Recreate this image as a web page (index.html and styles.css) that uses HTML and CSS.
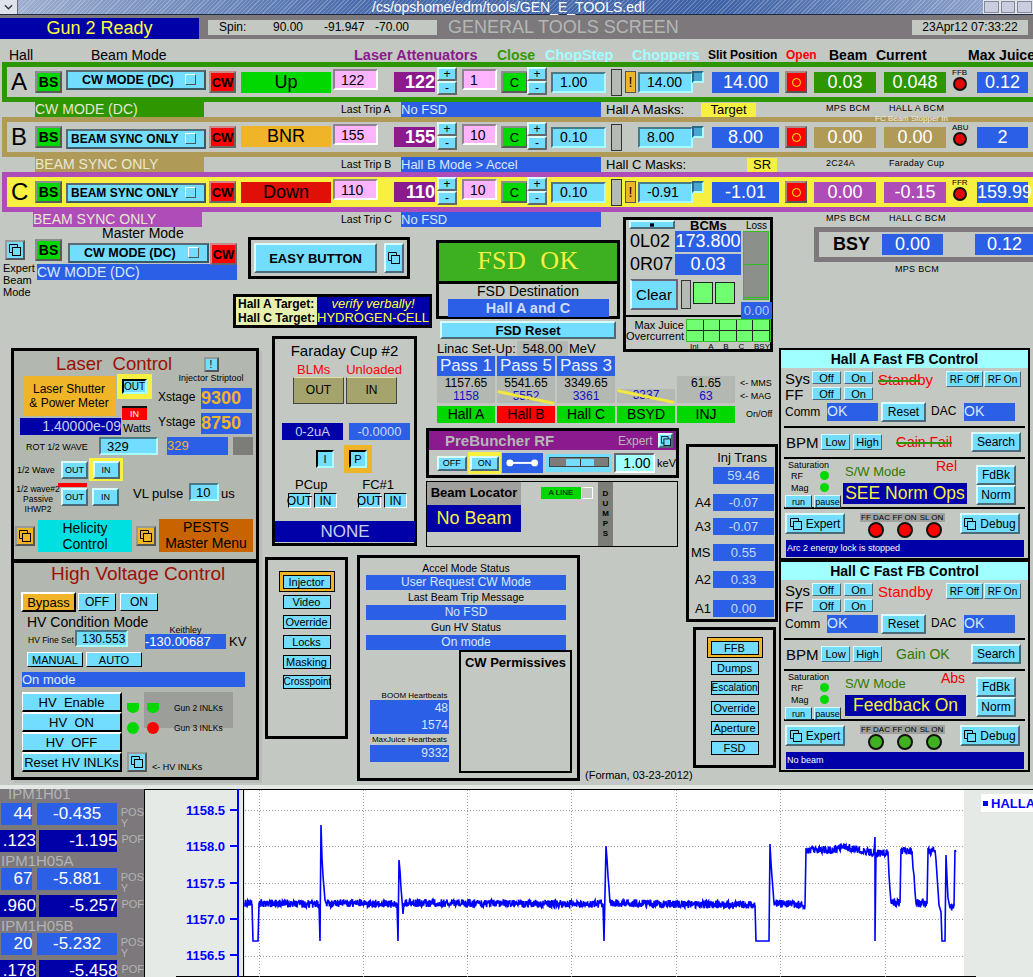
FILE: index.html
```html
<!DOCTYPE html>
<html lang="en">

<head>
    <meta charset="UTF-8">
    <title>/cs/opshome/edm/tools/GEN_E_TOOLS.edl</title>
    <link rel="stylesheet" href="styles.css">
</head>

<body>
    <svg class="defs">
        <symbol id="copy" viewBox="0 0 12 12">
            <path d="M3.5 8.5h-3v-8h8v3" fill="none" stroke="#000" />
            <rect x="3.5" y="3.5" width="8" height="8" fill="none" stroke="#000" />
        </symbol>
    </svg>

    <header class="titlebar">
        <div class="wm-left"><svg viewBox="0 0 10 6" class="wm-chevron"><path d="M1 1l4 4 4-4" fill="none" stroke="#334" stroke-width="1.5" /></svg></div>
        <div class="wm-title">/cs/opshome/edm/tools/GEN_E_TOOLS.edl</div>
        <div class="wm-right"><i></i><i></i><i></i></div>
    </header>

    <div class="topbar">
        <div class="gun">Gun 2 Ready</div>
        <div class="spin"><span>Spin:</span><span>90.00</span><span>-91.947</span><span>-70.00</span></div>
        <div class="screen-title">GENERAL TOOLS SCREEN</div>
        <div class="clock">23Apr12 07:33:22</div>
    </div>

    <div class="col-labels">
        <span>Hall</span><span>Beam Mode</span><span class="l-laser">Laser Attenuators</span><span class="l-close">Close</span>
        <span class="l-chop">ChopStep</span><span class="l-chop">Choppers</span><span class="l-slit">Slit Position</span><span class="l-open">Open</span>
        <span class="l-beam">Beam</span><span class="l-beam">Current</span><span class="l-beam">Max Juice</span>
    </div>

    <!-- Hall A -->
    <section class="hall hall-a">
        <div class="hall-letter">A</div>
        <div class="btn bs">BS</div>
        <div class="btn mode">CW MODE (DC)<i></i></div>
        <div class="btn cw">CW</div>
        <div class="status green">Up</div>
        <div class="entry pink">122</div>
        <div class="atten">122</div>
        <div class="stepper"><span>+</span><span>-</span></div>
        <div class="entry pink small">1</div>
        <div class="btn close">C</div>
        <div class="stepper"><span>+</span><span>-</span></div>
        <div class="entry step">1.00</div>
        <div class="slot"></div>
        <div class="warn">!</div>
        <div class="entry chopper">14.00</div>
        <div class="knob"></div>
        <div class="readout slit">14.00</div>
        <div class="btn open"><i></i></div>
        <div class="readout bcm">0.03</div>
        <div class="readout bcm">0.048</div>
        <div class="lamp-cell"><small>FFB</small><i class="lamp"></i></div>
        <div class="readout juice">0.12</div>
    </section>
    <div class="info-row">
        <div class="strip strip-a">CW MODE (DC)</div>
        <div class="last-trip">Last Trip A</div>
        <div class="trip-msg">No FSD</div>
        <div class="masks">Hall A Masks:</div>
        <div class="mask-tag tag-target">Target</div>
        <div class="tiny">MPS BCM</div>
        <div class="tiny">HALL A BCM</div>
    </div>

    <!-- Hall B -->
    <section class="hall hall-b">
        <div class="hall-letter">B</div>
        <div class="btn bs">BS</div>
        <div class="btn mode">BEAM SYNC ONLY<i></i></div>
        <div class="btn cw">CW</div>
        <div class="status amber">BNR</div>
        <div class="entry pink">155</div>
        <div class="atten">155</div>
        <div class="stepper"><span>+</span><span>-</span></div>
        <div class="entry pink small">10</div>
        <div class="btn close">C</div>
        <div class="stepper"><span>+</span><span>-</span></div>
        <div class="entry step">0.10</div>
        <div class="slot"></div>
        <div></div>
        <div class="entry chopper">8.00</div>
        <div class="knob"></div>
        <div class="readout slit">8.00</div>
        <div class="btn open"><i></i></div>
        <div class="readout bcm">0.00</div>
        <div class="readout bcm">0.00</div>
        <div class="lamp-cell"><small>ABU</small><i class="lamp"></i></div>
        <div class="readout juice">2</div>
        <div class="stopper">FC Beam Stopper In</div>
    </section>
    <div class="info-row">
        <div class="strip strip-b">BEAM SYNC ONLY</div>
        <div class="last-trip">Last Trip B</div>
        <div class="trip-msg">Hall B Mode &gt; Accel</div>
        <div class="masks">Hall C Masks:</div>
        <div class="mask-tag tag-sr">SR</div>
        <div class="tiny">2C24A</div>
        <div class="tiny">Faraday Cup</div>
    </div>

    <!-- Hall C -->
    <section class="hall hall-c">
        <div class="hall-letter">C</div>
        <div class="btn bs">BS</div>
        <div class="btn mode">BEAM SYNC ONLY<i></i></div>
        <div class="btn cw">CW</div>
        <div class="status red">Down</div>
        <div class="entry pink">110</div>
        <div class="atten">110</div>
        <div class="stepper"><span>+</span><span>-</span></div>
        <div class="entry pink small">10</div>
        <div class="btn close">C</div>
        <div class="stepper"><span>+</span><span>-</span></div>
        <div class="entry step">0.10</div>
        <div class="slot"></div>
        <div class="warn">!</div>
        <div class="entry chopper">-0.91</div>
        <div class="knob"></div>
        <div class="readout slit">-1.01</div>
        <div class="btn open"><i></i></div>
        <div class="readout bcm">0.00</div>
        <div class="readout bcm">-0.15</div>
        <div class="lamp-cell"><small>FFR</small><i class="lamp"></i></div>
        <div class="readout juice">159.99</div>
    </section>

    <main class="canvas">
        <div class="info-row">
            <div class="strip strip-c">BEAM SYNC ONLY</div>
            <div class="last-trip">Last Trip C</div>
            <div class="trip-msg">No FSD</div>
            <div class="masks"></div>
            <div class="mask-tag"></div>
            <div class="tiny">MPS BCM</div>
            <div class="tiny">HALL C BCM</div>
        </div>

        <!-- Master mode -->
        <div class="master">
            <div class="expert-col">
                <div class="btn link"><svg class="ico"><use href="#copy" /></svg></div>
                <p>Expert<br>Beam<br>Mode</p>
            </div>
            <div class="master-main">
                <div class="master-label">Master Mode</div>
                <div class="master-row">
                    <div class="btn bs">BS</div>
                    <div class="btn mode master-mode">CW MODE (DC)<i></i></div>
                    <div class="btn cw master-cw">CW</div>
                </div>
                <div class="master-strip">CW MODE (DC)</div>
            </div>
        </div>

        <div class="easy">
            <div class="btn easy-btn">EASY BUTTON</div>
            <div class="btn easy-link"><svg class="ico"><use href="#copy" /></svg></div>
        </div>

        <div class="targets">
            <div class="t-label">Hall A Target:</div>
            <div class="t-value t-italic">verify verbally!</div>
            <div class="t-label">Hall C Target:</div>
            <div class="t-value">HYDROGEN-CELL</div>
        </div>

        <!-- Laser control -->
        <div class="panel laser">
            <h2 class="red-title laser-title">Laser&nbsp; Control</h2>
            <div class="striptool">
                <div class="btn strip-btn">!</div>
                <small>Injector Striptool</small>
            </div>
            <div class="laser-top">
                <div class="laser-left">
                    <div class="shutter">Laser Shutter<br>&amp; Power Meter</div>
                    <div class="power">1.40000e-09</div>
                </div>
                <div class="laser-mid">
                    <div class="halo halo-yellow out-halo"><div class="btn blk out-btn">OUT</div></div>
                    <div class="in-red">IN</div>
                    <div class="watts">Watts</div>
                </div>
                <div class="laser-right">
                    <div class="stage"><span>Xstage</span><b>9300</b></div>
                    <div class="stage"><span>Ystage</span><b>8750</b></div>
                </div>
            </div>
            <div class="rot-row">
                <span class="rot-label">ROT 1/2 WAVE</span>
                <div class="entry rot">329</div>
                <div class="rot-val">329</div>
                <div class="rot-gray"></div>
            </div>
            <div class="wave-row">
                <span class="wave-label">1/2 Wave</span>
                <div class="btn wave">OUT</div>
                <div class="halo halo-yellow wave-halo"><div class="btn wave">IN</div></div>
            </div>
            <div class="wave2-row">
                <span class="wave2-label">1/2 wave#2<br>Passive<br>IHWP2</span>
                <div class="wave2-btns">
                    <i class="red-bar"></i>
                    <div class="wave2-pair"><div class="btn wave">OUT</div><div class="btn wave">IN</div></div>
                </div>
                <span class="vl">VL pulse</span>
                <div class="entry vl-entry">10</div>
                <span class="us">us</span>
            </div>
            <div class="menu-row">
                <div class="btn link amber-link"><svg class="ico"><use href="#copy" /></svg></div>
                <div class="helicity">Helicity<br>Control</div>
                <div class="btn link amber-link"><svg class="ico"><use href="#copy" /></svg></div>
                <div class="pests">PESTS<br>Master Menu</div>
            </div>
        </div>

        <!-- High voltage -->
        <div class="panel hv">
            <h2 class="red-title hv-title">High Voltage Control</h2>
            <div class="hv-row1">
                <div class="hv-btn hv-bypass">Bypass</div>
                <div class="hv-btn hv-off">OFF</div>
                <div class="hv-btn hv-off">ON</div>
            </div>
            <div class="hv-cond">HV Condition Mode</div>
            <div class="hv-fine">
                <span class="fine-label">HV Fine Set</span>
                <div class="entry fine">130.553</div>
                <div class="keithley"><small>Keithley</small><div>-130.00687</div></div>
                <span class="kv">KV</span>
            </div>
            <div class="hv-auto"><div class="hv-btn">MANUAL</div><div class="hv-btn">AUTO</div></div>
            <div class="hv-status">On mode</div>
            <div class="hv-low">
                <div class="hv-list">
                    <div class="hv-btn">HV&nbsp; Enable</div>
                    <div class="hv-btn">HV&nbsp; ON</div>
                    <div class="hv-btn">HV&nbsp; OFF</div>
                    <div class="hv-btn">Reset HV INLKs</div>
                </div>
                <div class="hv-side">
                    <div class="inlks">
                        <div class="inlk"><i class="dot flat"></i><i class="dot flat"></i><span>Gun 2 INLKs</span></div>
                        <div class="inlk"><i class="dot"></i><i class="dot dot-red"></i><span>Gun 3 INLKs</span></div>
                    </div>
                    <div class="hv-link">
                        <div class="btn link"><svg class="ico"><use href="#copy" /></svg></div>
                        <small>&lt;- HV INLKs</small>
                    </div>
                </div>
            </div>
        </div>

        <!-- Faraday cup -->
        <div class="panel-plain faraday">
            <div class="fc-title">Faraday Cup #2</div>
            <div class="fc-warn"><span>BLMs</span><span>Unloaded</span></div>
            <div class="fc-pair"><div class="fc-btn">OUT</div><div class="fc-btn">IN</div></div>
            <div class="fc-vals"><div class="fc-range">0-2uA</div><div class="fc-read">-0.0000</div></div>
            <div class="fc-ip">
                <div class="btn blk fc-i">I</div>
                <div class="halo halo-amber"><div class="btn blk fc-p">P</div></div>
            </div>
            <div class="fc-names"><span>PCup</span><span>FC#1</span></div>
            <div class="fc-io">
                <div class="fc-mini"><div class="btn">OUT</div><div class="btn">IN</div></div>
                <div class="fc-mini"><div class="btn">OUT</div><div class="btn">IN</div></div>
            </div>
            <div class="fc-none">NONE</div>
        </div>

        <!-- FSD -->
        <div class="fsd">
            <div class="fsd-ok">FSD&nbsp; OK</div>
            <div class="fsd-dest">FSD Destination</div>
            <div class="fsd-hall">Hall A and C</div>
        </div>
        <div class="btn fsd-reset">FSD Reset</div>

        <div class="linac">
            <div class="linac-row"><span>Linac Set-Up:</span><b>548.00</b><span>MeV</span></div>
            <div class="pass-grid">
                <div class="pass">Pass 1</div>
                <div class="pass">Pass 5</div>
                <div class="pass">Pass 3</div>
                <div></div>
                <div></div>
                <div></div>

                <div class="energy">1157.65<em>1158</em></div>
                <div class="energy off struck">5541.65<em>5552</em></div>
                <div class="energy">3349.65<em>3361</em></div>
                <div class="energy bsyd struck"><em>3337</em></div>
                <div class="energy">61.65<em>63</em></div>
                <div class="mms">&lt;- MMS<br>&lt;- MAG</div>

                <div class="hall-tag on">Hall A</div>
                <div class="hall-tag trip">Hall B</div>
                <div class="hall-tag on">Hall C</div>
                <div class="hall-tag on">BSYD</div>
                <div class="hall-tag on">INJ</div>
                <div class="onoff">On/Off</div>
            </div>
        </div>

        <!-- PreBuncher -->
        <div class="prebuncher">
            <div class="pb-head">
                <span class="pb-name">PreBuncher RF</span>
                <span class="pb-expert">Expert</span>
                <div class="btn pb-link"><svg class="ico"><use href="#copy" /></svg></div>
            </div>
            <div class="pb-body">
                <div class="btn pb-off">OFF</div>
                <div class="halo halo-yellow pb-halo"><div class="btn pb-on">ON</div></div>
                <div class="pb-switch"><svg viewBox="0 0 41 20"><path d="M9 10h23" stroke="#fff" stroke-width="2" /><circle cx="8" cy="10" r="3.5" fill="#fff" /><circle cx="33" cy="10" r="3.5" fill="#fff" /></svg></div>
                <div class="pb-slider"><div class="pb-track"><i></i></div></div>
                <div class="entry pb-entry">1.00</div>
                <span class="pb-kev">keV</span>
            </div>
        </div>

        <!-- Beam locator -->
        <div class="locator">
            <div class="loc-left">
                <div class="loc-head">Beam Locator</div>
                <div class="loc-val">No Beam</div>
            </div>
            <div class="loc-line"><span>A LINE</span><i></i></div>
            <div class="dumps">D<br>U<br>M<br>P<br>S</div>
        </div>

        <!-- BCMs -->
        <div class="bcms">
            <div class="bcms-top">
                <div class="bcms-main">
                    <div class="bcms-head"><div class="btn bcms-btn"><svg viewBox="0 0 6 5" class="bcms-ico"><rect width="6" height="5" /></svg></div><b>BCMs</b></div>
                    <div class="bcm-line"><span>0L02</span><div>173.800</div></div>
                    <div class="bcm-line"><span>0R07</span><div>0.03</div></div>
                    <div class="bcm-clear">
                        <div class="btn clear">Clear</div>
                        <div class="slot clear-slot"></div>
                        <i class="sq"></i><i class="sq"></i>
                    </div>
                </div>
                <div class="loss">
                    <span>Loss</span>
                    <div class="loss-bar"><i></i><i></i></div>
                    <div class="loss-val">0.00</div>
                </div>
            </div>
            <div class="bcms-bot">
                <div class="oc-labels">Max Juice<br>Overcurrent</div>
                <div class="oc-cells">
                    <div class="oc-grid"><i></i><i></i><i></i><i></i><i></i><i></i><i></i><i></i><i></i><i></i></div>
                    <div class="oc-names"><span>Inj</span><span>A</span><span>B</span><span>C</span><span>BSY</span></div>
                </div>
            </div>
        </div>

        <div class="bsy">
            <b>BSY</b>
            <div class="readout bsy-a">0.00</div>
            <div class="readout bsy-b">0.12</div>
        </div>
        <div class="tiny bsy-tiny">MPS BCM</div>

        <!-- Inj trans -->
        <div class="panel-plain inj">
            <div class="inj-title">Inj Trans</div>
            <div class="inj-row inj-first"><span></span><div>59.46</div></div>
            <div class="inj-row inj-a4"><span>A4</span><div>-0.07</div></div>
            <div class="inj-row inj-a3"><span>A3</span><div>-0.07</div></div>
            <div class="inj-row inj-ms"><span>MS</span><div>0.55</div></div>
            <div class="inj-row inj-a2"><span>A2</span><div>0.33</div></div>
            <div class="inj-row inj-a1"><span>A1</span><div>0.00</div></div>
        </div>

        <!-- Menus -->
        <div class="panel-plain menu menu-left">
            <div class="menu-sel"><div class="menu-btn">Injector</div></div>
            <div class="menu-btn">Video</div>
            <div class="menu-btn">Override</div>
            <div class="menu-btn">Locks</div>
            <div class="menu-btn">Masking</div>
            <div class="menu-btn menu-tight">Crosspoint</div>
        </div>
        <div class="panel-plain menu menu-right">
            <div class="menu-sel"><div class="menu-btn">FFB</div></div>
            <div class="menu-btn">Dumps</div>
            <div class="menu-btn menu-tight">Escalation</div>
            <div class="menu-btn">Override</div>
            <div class="menu-btn">Aperture</div>
            <div class="menu-btn">FSD</div>
        </div>

        <!-- Accel status -->
        <div class="panel-plain accel">
            <div class="ac-label">Accel Mode Status</div>
            <div class="ac-val">User Request CW Mode</div>
            <div class="ac-label">Last Beam Trip Message</div>
            <div class="ac-val">No FSD</div>
            <div class="ac-label">Gun HV Status</div>
            <div class="ac-val">On mode</div>
            <div class="ac-low">
                <div class="heart">
                    <small>BOOM Heartbeats</small>
                    <div class="heart-val">48<br>1574</div>
                    <small>MaxJuice Heartbeats</small>
                    <div class="heart-val heart-one">9332</div>
                </div>
                <div class="cw-perm"><b>CW Permissives</b></div>
            </div>
        </div>
        <div class="forman">(Forman, 03-23-2012)</div>

        <!-- Fast feedback panels -->
        <div class="fb fb-a">
            <h3>Hall A Fast FB Control</h3>
            <div class="fb-row fb-sys">
                <span class="fb-big">Sys</span>
                <div class="btn fb-small">Off</div><div class="btn fb-small">On</div>
                <span class="fb-state struck-line">Standby</span>
                <div class="btn rf">RF Off</div><div class="btn rf">RF On</div>
            </div>
            <div class="fb-row fb-ff">
                <span class="fb-big">FF</span>
                <div class="btn fb-small">Off</div><div class="btn fb-small">On</div>
            </div>
            <div class="fb-row fb-comm">
                <span class="fb-name">Comm</span><div class="fb-ok">OK</div>
                <div class="btn fb-reset">Reset</div>
                <span class="fb-dac">DAC</span><div class="fb-ok">OK</div>
            </div>
            <div class="fb-rule"></div>
            <div class="fb-row fb-bpm">
                <span class="fb-bpm-name">BPM</span>
                <div class="btn fb-lh">Low</div><div class="btn fb-lh">High</div>
                <span class="fb-gain red-txt struck-line">Gain Fail</span>
                <div class="btn fb-search">Search</div>
            </div>
            <div class="fb-rule"></div>
            <div class="fb-row fb-mode">
                <div class="fb-sat">
                    <div class="sat-title">Saturation</div>
                    <div class="sat-line"><span>RF</span><i class="dot sat-dot"></i></div>
                    <div class="sat-line"><span>Mag</span><i class="dot sat-dot"></i></div>
                    <div class="sat-btns"><div class="btn">run</div><div class="btn">pause</div></div>
                </div>
                <div class="fb-sw">
                    <div class="sw-line"><span class="sw-name">S/W Mode</span><span class="sw-rel">Rel</span></div>
                    <div class="sw-val">SEE Norm Ops</div>
                </div>
                <div class="fb-fd"><div class="btn">FdBk</div><div class="btn">Norm</div></div>
            </div>
            <div class="fb-rule"></div>
            <div class="fb-row fb-act">
                <div class="btn fb-link"><svg class="ico"><use href="#copy" /></svg>Expert</div>
                <div class="fb-lamps">
                    <div class="fb-lamp-names"><span>FF DAC</span><span>FF ON</span><span>SL ON</span></div>
                    <div class="fb-lamp-row"><i class="fb-lamp"></i><i class="fb-lamp"></i><i class="fb-lamp"></i></div>
                </div>
                <div class="btn fb-link"><svg class="ico"><use href="#copy" /></svg>Debug</div>
            </div>
            <div class="fb-msg">Arc 2 energy lock is stopped</div>
        </div>

        <div class="fb fb-c">
            <h3>Hall C Fast FB Control</h3>
            <div class="fb-row fb-sys">
                <span class="fb-big">Sys</span>
                <div class="btn fb-small">Off</div><div class="btn fb-small">On</div>
                <span class="fb-state">Standby</span>
                <div class="btn rf">RF Off</div><div class="btn rf">RF On</div>
            </div>
            <div class="fb-row fb-ff">
                <span class="fb-big">FF</span>
                <div class="btn fb-small">Off</div><div class="btn fb-small">On</div>
            </div>
            <div class="fb-row fb-comm">
                <span class="fb-name">Comm</span><div class="fb-ok">OK</div>
                <div class="btn fb-reset">Reset</div>
                <span class="fb-dac">DAC</span><div class="fb-ok">OK</div>
            </div>
            <div class="fb-rule"></div>
            <div class="fb-row fb-bpm">
                <span class="fb-bpm-name">BPM</span>
                <div class="btn fb-lh">Low</div><div class="btn fb-lh">High</div>
                <span class="fb-gain green-txt">Gain OK</span>
                <div class="btn fb-search">Search</div>
            </div>
            <div class="fb-rule"></div>
            <div class="fb-row fb-mode">
                <div class="fb-sat">
                    <div class="sat-title">Saturation</div>
                    <div class="sat-line"><span>RF</span><i class="dot sat-dot"></i></div>
                    <div class="sat-line"><span>Mag</span><i class="dot sat-dot"></i></div>
                    <div class="sat-btns"><div class="btn">run</div><div class="btn">pause</div></div>
                </div>
                <div class="fb-sw">
                    <div class="sw-line"><span class="sw-name">S/W Mode</span><span class="sw-rel sw-abs">Abs</span></div>
                    <div class="sw-val sw-narrow">Feedback On</div>
                </div>
                <div class="fb-fd"><div class="btn">FdBk</div><div class="btn">Norm</div></div>
            </div>
            <div class="fb-rule"></div>
            <div class="fb-row fb-act">
                <div class="btn fb-link"><svg class="ico"><use href="#copy" /></svg>Expert</div>
                <div class="fb-lamps">
                    <div class="fb-lamp-names"><span>FF DAC</span><span>FF ON</span><span>SL ON</span></div>
                    <div class="fb-lamp-row"><i class="fb-lamp lamp-on"></i><i class="fb-lamp lamp-on"></i><i class="fb-lamp lamp-on"></i></div>
                </div>
                <div class="btn fb-link"><svg class="ico"><use href="#copy" /></svg>Debug</div>
            </div>
            <div class="fb-msg">No beam</div>
        </div>
    </main>

    <div class="sep"></div>

    <footer class="bottom">
        <div class="ipm">
            <div class="ipm-name first">IPM1H01</div>
            <div class="ipm-row"><div class="ipm-a">44</div><div class="ipm-b">-0.435</div><span>POS<br>Y</span></div>
            <div class="ipm-row dark"><div class="ipm-a">.123</div><div class="ipm-b">-1.195</div><span>POF</span></div>
            <div class="ipm-name">IPM1H05A</div>
            <div class="ipm-row"><div class="ipm-a">67</div><div class="ipm-b">-5.881</div><span>POS<br>Y</span></div>
            <div class="ipm-row dark"><div class="ipm-a">.960</div><div class="ipm-b">-5.257</div><span>POF</span></div>
            <div class="ipm-name">IPM1H05B</div>
            <div class="ipm-row"><div class="ipm-a">20</div><div class="ipm-b">-5.232</div><span>POS<br>Y</span></div>
            <div class="ipm-row dark"><div class="ipm-a">.178</div><div class="ipm-b">-5.458</div><span>POF</span></div>
        </div>
        <svg class="plot" viewBox="145 789 888 188">
            <rect x="145" y="789" width="888" height="188" fill="#e6eae6" />
            <rect x="245" y="790" width="719" height="187" fill="#fff" />
            <path d="M145 789.5H1033M243.5 789V977M176 976.5H976" stroke="#000" fill="none" />
            <g class="grid">
                <path d="M245 810.5H964M245 846.5H964M245 883.5H964M245 919.5H964M245 956.5H964" />
                <path d="M259.5 790V977M363.5 790V977M467.5 790V977M571.5 790V977M676.5 790V977M780.5 790V977M885.5 790V977" />
            </g>
            <path d="M238 789V977" stroke="#00f" stroke-width="2" />
            <path d="M230 810h7M230 846h7M230 883h7M230 919h7M230 955h7" stroke="#00f" stroke-width="2" />
            <g class="ticks">
                <text x="225" y="815">1158.5</text>
                <text x="225" y="851">1158.0</text>
                <text x="225" y="888">1157.5</text>
                <text x="225" y="924">1157.0</text>
                <text x="225" y="960">1156.5</text>
            </g>
            <polyline id="trace" fill="none" stroke="#00f" stroke-width="1.6" />
            <rect x="981" y="794" width="52" height="18" fill="#fff" />
            <rect x="983" y="801" width="5" height="5" fill="#00f" />
            <text x="991" y="808" class="legend">HALLA:</text>
        </svg>
    </footer>

    <script src="plot.js"></script>
</body>

</html>
```

FILE: styles.css
```css
* {
    box-sizing: border-box;
}

html,
body {
    margin: 0;
    height: 977px;
    overflow: hidden;
}

body {
    width: 1033px;
    background-color: #c4c8c2;
    font-family: "Liberation Sans", Arial, sans-serif;
    font-size: 13px;
    color: #000;
}

h2, h3, p {
    margin: 0;
    font-weight: normal;
}

i {
    display: block;
}

.defs {
    display: none;
}

/* window manager title */
.titlebar {
    height: 15px;
    border-bottom: 1px solid #1c2a44;
    display: flex;
    background:
        repeating-linear-gradient(135deg, rgba(255, 255, 255, 0.22) 0 1px, transparent 1px 3px),
        linear-gradient(90deg, #a0b0d0, #4a6cac 35%, #3e62a6 70%, #9aacd0);
}

.wm-left {
    width: 18px;
    background: #dfe3ec;
    border-right: 1px solid #667;
    display: flex;
    align-items: center;
    justify-content: center;
}

.wm-chevron {
    width: 9px;
    height: 6px;
}

.wm-title {
    margin-left: 354px;
    width: 611px;
    color: #fff;
    font-size: 14px;
    line-height: 14px;
}

.wm-right {
    width: 50px;
    display: flex;
    background: #dfe3ec;
}

.wm-right i {
    flex: 1;
    margin: 1px;
    background: #c8cee0;
    border: 1px solid #889;
}

/* grey screen header */
.topbar {
    height: 24px;
    background-color: #7c787c;
    display: flex;
    align-items: center;
}

.gun {
    width: 199px;
    height: 21px;
    margin-top: 3px;
    background-color: #0000a8;
    color: #ffff40;
    font-size: 18px;
    line-height: 21px;
    text-align: center;
}

.spin {
    width: 229px;
    height: 15px;
    margin-left: 9px;
    background-color: #c4c8c2;
    display: grid;
    grid-template-columns: 54px 51px 51px auto;
    padding-left: 11px;
    font-size: 12px;
    line-height: 15px;
}

.screen-title {
    margin-left: 11px;
    color: #b4b8b4;
    font-size: 18px;
    width: 464px;
}

.clock {
    width: 116px;
    height: 15px;
    background-color: #c4c8c2;
    font-size: 12px;
    line-height: 15px;
    text-align: center;
}

/* column labels above the halls */
.col-labels {
    height: 23px;
    padding: 9px 0 0 9px;
    display: grid;
    grid-template-columns: 82px 263px 143px 48px 87px 76px 78px 43px 47px 92px auto;
    font-size: 14px;
    line-height: 15px;
    white-space: nowrap;
}

.l-laser {
    color: #8a1a8e;
    font-weight: bold;
    font-size: 14.5px;
}

.l-close {
    color: #339900;
    font-weight: bold;
    font-size: 14px;
}

.l-chop {
    color: #a0ffff;
    font-weight: bold;
    font-size: 14.5px;
}

.l-slit {
    font-weight: bold;
    font-size: 12px;
}

.l-open {
    color: #f00;
    font-weight: bold;
    font-size: 12px;
}

.l-beam {
    font-weight: bold;
    font-size: 14px;
}

/* hall rows */
.hall {
    position: relative;
    height: 40px;
    margin-left: 2px;
    border: 5px solid;
    border-right: none;
    display: grid;
    grid-template-columns: 28px 31px 143px 32px 92px 61px 43px 25px 39px 26px 24px 60px 14px 13px 55px 19px 73px 29px 70px 66px 27px 56px;
    align-items: center;
    justify-items: start;
    white-space: nowrap;
}

.hall-a {
    border-color: #2e9600;
}

.hall-b {
    border-color: #b09a58;
}

.hall-c {
    border-color: #ae4cb8;
    background-color: #f8f040;
}

.hall-letter {
    font-size: 24px;
    padding-left: 4px;
}

.btn {
    display: flex;
    align-items: center;
    justify-content: center;
    background-color: #73ddff;
    border: 2px solid;
    border-color: #d8fcff #4a6a78 #4a6a78 #d8fcff;
    white-space: nowrap;
}

.btn.blk {
    border: 2px solid #000;
    border-color: #000 #a8ffff #a8ffff #000;
}

.bs {
    width: 27px;
    height: 22px;
    background-color: #00d800;
    border-color: #8c8c8c #5a5a5a #5a5a5a #8c8c8c;
    font-weight: bold;
    font-size: 14px;
}

.mode {
    position: relative;
    width: 140px;
    height: 20px;
    justify-content: flex-start;
    padding-left: 14px;
    font-weight: bold;
    font-size: 12.5px;
    border-color: #5a6a70 #3a5a68 #3a5a68 #5a6a70;
}

.hall-a .mode {
    margin-top: -4px;
}

.hall-b .mode {
    margin-top: 4px;
    padding-left: 3px;
    font-size: 12px;
}

.hall-c .mode {
    margin-top: 2px;
    padding-left: 3px;
    font-size: 12px;
}

.mode i {
    position: absolute;
    right: 8px;
    top: 2px;
    width: 11px;
    height: 11px;
    border: 1px solid;
    border-color: #fff #555 #555 #fff;
}

.cw {
    width: 27px;
    height: 22px;
    background-color: #f00;
    border-color: #c88 #666 #666 #c88;
    font-size: 13px;
    font-weight: bold;
}

.status {
    width: 90px;
    height: 21px;
    display: flex;
    align-items: center;
    justify-content: center;
    font-size: 18px;
}

.status.green {
    background-color: #00d800;
}

.status.amber {
    background-color: #f0b428;
    margin-bottom: 2px;
}

.status.red {
    background-color: #e01008;
}

.entry {
    display: flex;
    align-items: center;
    background-color: #73ddff;
    border: 2px solid;
    border-color: #4a7a88 #a8ffff #a8ffff #4a7a88;
    white-space: nowrap;
}

.pink {
    width: 45px;
    height: 21px;
    margin-bottom: 5px;
    background-color: #ffb4ff;
    border-color: #908090 #fff #fff #908090;
    padding-left: 6px;
    font-size: 14px;
}

.pink.small {
    width: 35px;
}

.atten {
    width: 41px;
    height: 20px;
    background-color: #8a1a8e;
    color: #fff;
    font-size: 18px;
    font-weight: bold;
    line-height: 20px;
    text-align: right;
}

.stepper {
    width: 20px;
    height: 28px;
    margin-bottom: 2px;
    display: grid;
    grid-template-rows: 1fr 1fr;
}

.stepper span {
    background-color: #73ddff;
    border: 2px solid;
    border-color: #d8fcff #666 #666 #d8fcff;
    text-align: center;
    font-size: 12px;
    line-height: 10px;
}

.hall .close {
    width: 27px;
    height: 22px;
    background-color: #00d800;
    border-color: #8c8c8c #5a5a5a #5a5a5a #8c8c8c;
    font-size: 13px;
}

.step {
    width: 55px;
    height: 21px;
    padding-left: 7px;
    font-size: 14px;
}

.slot {
    width: 11px;
    height: 27px;
    background-color: #b6bab4;
    border: 1px solid #333;
}

.warn {
    width: 11px;
    height: 22px;
    background-color: #f0b428;
    border: 1px solid #555;
    text-align: center;
    font-size: 14px;
    line-height: 20px;
}

.chopper {
    width: 55px;
    height: 21px;
    padding-left: 7px;
    font-size: 14px;
}

.knob {
    width: 12px;
    height: 12px;
    margin: -10px 0 0 -1px;
    background-color: #4aa8d0;
    border: 2px solid;
    border-color: #2a6a88 #a8ffff #a8ffff #2a6a88;
}

.readout {
    height: 21px;
    background-color: #2b60e6;
    color: #fff;
    font-size: 18px;
    line-height: 21px;
    text-align: center;
}

.slit {
    width: 67px;
}

.open {
    position: relative;
    width: 22px;
    height: 22px;
    background-color: #f00;
    border-color: #a88 #555 #555 #a88;
}

.open i {
    width: 9px;
    height: 9px;
    border: 1px solid #ff0;
    border-radius: 50%;
}

.bcm {
    width: 62px;
}

.hall-a .bcm {
    background-color: #2e9600;
}

.hall-b .bcm {
    background-color: #b09a58;
}

.hall-c .bcm {
    background-color: #ae4cb8;
}

.lamp-cell {
    display: flex;
    flex-direction: column;
    align-items: center;
    margin-left: 2px;
}

.lamp-cell small {
    font-size: 8px;
    line-height: 8px;
    margin-top: -4px;
}

.lamp {
    width: 14px;
    height: 14px;
    background-color: #e00808;
    border: 2px solid #111;
    border-radius: 50%;
}

.juice {
    width: 51px;
}

.stopper {
    position: absolute;
    left: 868px;
    top: -8px;
    color: #f0f0e0;
    font-size: 8px;
    line-height: 9px;
}

.info-row {
    height: 15px;
    display: grid;
    grid-template-columns: 35px 169px 137px 60px 200px 100px 125px 63px auto;
    font-size: 11px;
    line-height: 15px;
    white-space: nowrap;
}

.strip {
    grid-column: 2;
    color: #e8e8d0;
    font-size: 14px;
}

.strip-a {
    background-color: #2e9600;
}

.strip-b {
    background-color: #b09a58;
}

.strip-c {
    background-color: #ae4cb8;
    margin-left: -2px;
    margin-right: 2px;
}

.last-trip {
    grid-column: 4;
    font-size: 10.5px;
}

.trip-msg {
    background-color: #2b60e6;
    color: #d8e8ff;
    font-size: 13px;
}

.masks {
    padding-left: 5px;
    font-size: 13px;
}

.mask-tag {
    margin-top: 1px;
    height: 14px;
    line-height: 14px;
    text-align: center;
    font-size: 13px;
}

.tag-target {
    background-color: #f8f040;
    width: 55px;
}

.tag-sr {
    background-color: #f8f040;
    width: 30px;
    margin-left: 46px;
}

.tiny {
    font-size: 9px;
    line-height: 12px;
    letter-spacing: 0.3px;
}

/* everything under the halls lies where the screen editor put it */
.canvas {
    position: relative;
    height: 573px;
}

.canvas > div:not(.info-row) {
    position: absolute;
}

.ico {
    width: 12px;
    height: 12px;
    display: block;
    flex: none;
}

.master {
    left: 3px;
    top: 14px;
    display: flex;
}

.expert-col {
    width: 32px;
    padding-top: 14px;
}

.btn.link {
    width: 20px;
    height: 20px;
    margin-left: 2px;
    border-color: #999 #555 #555 #999;
}

.expert-col p {
    font-size: 11px;
    line-height: 12px;
    margin-top: 2px;
}

.master-label {
    margin-left: 67px;
    font-size: 14px;
    line-height: 14px;
}

.master-row {
    display: flex;
    height: 25px;
    margin-top: -1px;
}

.master-mode {
    width: 141px;
    margin: 4px 0 0 6px;
}

.master-cw {
    margin: 4px 0 0 1px;
}

.master-strip {
    width: 200px;
    height: 16px;
    margin-left: 2px;
    background-color: #2b60e6;
    color: #d8e8ff;
    font-size: 14px;
    line-height: 16px;
}

.easy {
    left: 248px;
    top: 25px;
    width: 162px;
    height: 42px;
    border: 3px solid #000;
    display: flex;
    padding: 3px;
    gap: 7px;
}

.easy-btn {
    width: 124px;
    font-weight: bold;
    font-size: 13px;
}

.easy-link {
    width: 20px;
}

.targets {
    left: 233px;
    top: 82px;
    width: 199px;
    height: 34px;
    border: 3px solid #000;
    display: grid;
    grid-template-columns: 81px 1fr;
    grid-auto-rows: 14px;
    font-size: 13px;
    line-height: 14px;
    white-space: nowrap;
}

.t-label {
    background-color: #e8f0b0;
    font-weight: bold;
    padding-left: 2px;
    font-size: 12px;
}

.t-value {
    background-color: #0000a8;
    color: #ffff40;
    text-align: center;
}

.t-italic {
    font-style: italic;
}

.panel {
    left: 11px;
    width: 248px;
    border: 3px solid #000;
    background-color: #b2b7b0;
    box-shadow: 3px 3px 0 #b8bcb6;
    white-space: nowrap;
}

.panel-plain {
    border: 3px solid #000;
    white-space: nowrap;
}

.red-title {
    color: #9c1004;
    font-size: 18.5px;
}

/* laser control */
.laser {
    top: 136px;
    height: 214px;
}

.laser-title {
    height: 25px;
    padding-left: 42px;
    line-height: 25px;
}

.striptool {
    position: absolute;
    left: 164px;
    top: 6px;
    width: 66px;
    text-align: center;
}

.strip-btn {
    width: 15px;
    height: 15px;
    margin: 0 auto;
    font-size: 10px;
    border-color: #999 #555 #555 #999;
}

.striptool small {
    font-size: 9px;
    line-height: 13px;
    display: block;
}

.laser-top {
    display: flex;
    height: 61px;
}

.laser-left {
    width: 103px;
}

.shutter {
    margin-left: 9px;
    width: 92px;
    height: 40px;
    background-color: #f0b428;
    text-align: center;
    font-size: 12px;
    line-height: 14px;
    padding-top: 6px;
}

.power {
    width: 101px;
    height: 17px;
    margin: 2px 0 0 6px;
    background-color: #0000a8;
    color: #c8d0f0;
    text-align: right;
    font-size: 14px;
    line-height: 17px;
}

.laser-mid {
    width: 38px;
}

.halo {
    display: flex;
    align-items: center;
    justify-content: center;
}

.halo-yellow {
    background-color: #f8f040;
}

.halo-amber {
    background-color: #f0b428;
}

.out-halo {
    width: 35px;
    height: 25px;
    margin-top: -2px;
}

.out-btn {
    width: 25px;
    height: 15px;
    font-size: 10px;
}

.in-red {
    width: 25px;
    height: 14px;
    margin: 7px 0 0 5px;
    background-color: #f00;
    border-top: 2px solid #111;
    color: #fff;
    text-align: center;
    font-size: 9px;
    line-height: 12px;
}

.watts {
    margin: 2px 0 0 6px;
    font-size: 11px;
    line-height: 13px;
}

.laser-right {
    padding: 12px 0 0 3px;
}

.stage {
    display: flex;
    height: 21px;
    margin-bottom: 4px;
}

.stage span {
    width: 43px;
    font-size: 12px;
    line-height: 18px;
}

.stage b {
    width: 51px;
    background-color: #2b60e6;
    color: #f0b428;
    font-size: 18px;
    line-height: 21px;
}

.rot-row {
    display: flex;
    height: 18px;
    padding-left: 12px;
    margin-top: 0;
}

.rot-label {
    width: 73px;
    font-size: 9px;
    line-height: 20px;
}

.rot {
    width: 59px;
    padding-left: 6px;
    font-size: 13px;
}

.rot-val {
    width: 61px;
    margin-left: 9px;
    background-color: #2b60e6;
    color: #f0b428;
    font-size: 13px;
    line-height: 17px;
}

.rot-gray {
    width: 20px;
    margin-left: 5px;
    background-color: #7c7c78;
}

.wave-row {
    display: flex;
    height: 23px;
    margin-top: 3px;
    align-items: center;
    padding-left: 3px;
}

.wave-label {
    width: 44px;
    font-size: 9px;
}

.btn.wave {
    width: 27px;
    height: 18px;
    font-size: 9px;
}

.wave-halo {
    width: 34px;
    height: 23px;
    margin-left: 1px;
}

.wave2-row {
    display: flex;
    height: 37px;
    margin-top: 2px;
    padding-left: 1px;
}

.wave2-label {
    width: 46px;
    font-size: 8.5px;
    line-height: 10px;
    text-align: center;
    padding-top: 1px;
}

.red-bar {
    width: 29px;
    height: 4px;
    background-color: #f00;
    margin-left: -3px;
    margin-bottom: 1px;
}

.wave2-pair {
    display: flex;
    gap: 4px;
}

.vl {
    margin-left: 14px;
    font-size: 13px;
    line-height: 17px;
    padding-top: 2px;
}

.vl-entry {
    width: 30px;
    height: 18px;
    margin-left: 6px;
    padding-left: 5px;
    font-size: 13px;
}

.us {
    margin-left: 2px;
    font-size: 13px;
    padding-top: 3px;
}

.wave2-btns {
    width: 58px;
}

.menu-row {
    display: flex;
    align-items: center;
    height: 33px;
    margin-top: -1px;
}

.amber-link.amber-link {
    background-color: #f0b428;
    margin-left: 1px;
    flex: none;
}

.helicity {
    width: 94px;
    height: 32px;
    margin-left: 3px;
    background-color: #00e0e0;
    text-align: center;
    font-size: 14px;
    line-height: 16px;
}

.pests {
    width: 94px;
    height: 33px;
    margin-left: 3px;
    background-color: #c86400;
    text-align: center;
    font-size: 14px;
    line-height: 16px;
}

.menu-row .amber-link:nth-child(3) {
    margin-left: 4px;
}

/* high voltage */
.hv {
    top: 348px;
    height: 220px;
}

.hv-title {
    height: 29px;
    padding-left: 37px;
    line-height: 22px;
    font-size: 19px;
}

.hv-btn {
    display: flex;
    align-items: center;
    justify-content: center;
    background-color: #73ddff;
    border: 1px solid;
    border-color: #fff #000 #000 #fff;
    white-space: nowrap;
}

.hv-row1 {
    display: flex;
    height: 20px;
    padding-left: 7px;
    font-size: 12px;
}

.hv-bypass {
    width: 55px;
    background-color: #f0b428;
    border-width: 2px;
    font-size: 13px;
}

.hv-off {
    width: 38px;
    height: 18px;
    margin-top: 1px;
    margin-left: 2px;
}

.hv-off:last-child {
    margin-left: 4px;
}

.hv-cond {
    height: 17px;
    padding-left: 13px;
    font-size: 14px;
    line-height: 20px;
}

.hv-fine {
    display: flex;
    height: 21px;
    padding-left: 14px;
    margin-bottom: 2px;
}

.fine-label {
    width: 47px;
    font-size: 8.5px;
    line-height: 22px;
}

.fine {
    width: 53px;
    height: 17px;
    margin-top: 1px;
    padding-left: 5px;
    font-size: 12px;
}

.keithley {
    width: 81px;
    margin: -2px 0 0 17px;
    text-align: center;
}

.keithley small {
    display: block;
    font-size: 9px;
    line-height: 7px;
}

.keithley div {
    background-color: #2b60e6;
    color: #fff;
    height: 15px;
    font-size: 13px;
    line-height: 15px;
    text-align: left;
}

.kv {
    margin-left: 3px;
    padding-top: 5px;
    font-size: 13px;
}

.hv-auto {
    display: flex;
    gap: 3px;
    height: 15px;
    padding-left: 13px;
    font-size: 11px;
}

.hv-auto .hv-btn {
    width: 56px;
}

.hv-status {
    height: 15px;
    margin: 5px 0 0 8px;
    width: 223px;
    background-color: #2b60e6;
    color: #e0ecff;
    font-size: 13px;
    line-height: 15px;
}

.hv-low {
    display: flex;
    margin-top: 5px;
    padding-left: 8px;
}

.hv-list {
    width: 100px;
}

.hv-list .hv-btn {
    height: 20px;
    font-size: 13px;
    border-width: 2px 2px 2px 1px;
}

.hv-side {
    width: 120px;
}

.inlks {
    margin-left: 22px;
    width: 89px;
    height: 36px;
    background-color: #9c9e9a;
    padding-top: 6px;
}

.inlk {
    display: flex;
    align-items: center;
    height: 20px;
    margin-left: -17px;
    gap: 8px;
    font-size: 8.5px;
}

.inlk span {
    margin-left: 7px;
}

.dot {
    width: 12px;
    height: 12px;
    background-color: #00d800;
    border-radius: 50%;
    flex: none;
}

.dot.flat {
    border-radius: 0 0 50% 50%;
    height: 10px;
}

.dot-red {
    background-color: #f00;
}

.hv-link {
    display: flex;
    align-items: flex-end;
    margin: 24px 0 0 3px;
}

.hv-link small {
    font-size: 9px;
    margin: 0 0 0 5px;
}

/* faraday cup */
.faraday {
    left: 272px;
    top: 124px;
    width: 145px;
    height: 210px;
    text-align: center;
}

.fc-title {
    height: 23px;
    font-size: 15px;
    line-height: 19px;
    padding-top: 2px;
}

.fc-warn {
    display: flex;
    color: #f00;
    font-size: 13px;
    line-height: 15px;
    padding-left: 22px;
    gap: 16px;
}

.fc-pair {
    display: flex;
    gap: 2px;
    height: 27px;
    padding-left: 18px;
}

.fc-btn {
    width: 51px;
    background-color: #a4a46c;
    border: 1px solid;
    border-color: #e0e0a0 #444 #444 #444;
    font-size: 12px;
    line-height: 25px;
}

.fc-vals {
    display: flex;
    gap: 6px;
    margin: 19px 0 0 7px;
    height: 17px;
    font-size: 13px;
    line-height: 17px;
}

.fc-range {
    width: 61px;
    background-color: #0000a8;
    color: #c8d0f0;
}

.fc-read {
    width: 61px;
    background-color: #2b60e6;
    color: #c8d8ff;
}

.fc-ip {
    display: flex;
    align-items: center;
    height: 28px;
    margin-top: 5px;
    padding-left: 41px;
    gap: 10px;
}

.fc-i,
.fc-p {
    width: 18px;
    height: 18px;
    font-size: 11px;
}

.fc-ip .halo {
    width: 28px;
    height: 28px;
}

.fc-names {
    display: flex;
    justify-content: space-between;
    padding: 0 20px 0 20px;
    height: 18px;
    font-size: 13px;
    line-height: 18px;
    margin-top: 3px;
}

.fc-io {
    display: flex;
    padding-left: 13px;
    gap: 21px;
    margin-top: -1px;
}

.fc-mini {
    display: flex;
    gap: 3px;
    height: 15px;
    font-size: 12px;
}

.fc-mini .btn {
    width: 23px;
    border-color: #000 #fff #fff #000;
    border-width: 1px;
}

.fc-none {
    width: 140px;
    height: 21px;
    margin-top: 13px;
    background-color: #0000a8;
    color: #c8d0f0;
    font-size: 17px;
    line-height: 21px;
}

/* fsd */
.fsd {
    left: 436px;
    top: 28px;
    width: 184px;
    height: 79px;
    border: 3px solid #000;
    text-align: center;
}

.fsd-ok {
    height: 41px;
    background-color: #3cb020;
    border-bottom: 3px solid #000;
    color: #f8f040;
    font-family: "Liberation Serif", serif;
    font-size: 26px;
    letter-spacing: 0.5px;
    line-height: 36px;
}

.fsd-dest {
    font-size: 14px;
    line-height: 15px;
}

.fsd-hall {
    width: 161px;
    height: 18px;
    margin: 0 auto;
    background-color: #2b60e6;
    color: #d0dcff;
    font-weight: bold;
    font-size: 14.5px;
    line-height: 18px;
}

.fsd-reset {
    left: 440px;
    top: 109px;
    width: 176px;
    height: 18px;
    font-weight: bold;
    font-size: 13px;
}

.linac {
    left: 437px;
    top: 129px;
    white-space: nowrap;
}

.linac-row {
    display: flex;
    height: 15px;
    font-size: 13px;
    line-height: 15px;
}

.linac-row span:first-child {
    width: 80px;
}

.linac-row b {
    width: 51px;
    background-color: #b4b8b2;
    font-weight: normal;
    text-align: center;
    margin-right: 1px;
}

.pass-grid {
    display: grid;
    grid-template-columns: repeat(5, 58px) 40px;
    grid-template-rows: 20px 27px 20px;
    column-gap: 2px;
}

.pass {
    background-color: #2b60e6;
    color: #e8f0ff;
    font-size: 17px;
    line-height: 20px;
    text-align: center;
}

.energy {
    position: relative;
    background-color: #b4b8b2;
    font-size: 12px;
    line-height: 13px;
    text-align: center;
    padding-top: 1px;
}

.energy em {
    display: block;
    font-style: normal;
    color: #1010c0;
}

.energy.bsyd {
    margin-top: 13px;
    padding-top: 0;
}

.energy.struck::after {
    content: "";
    position: absolute;
    left: 0;
    top: 20px;
    width: 58px;
    height: 3px;
    background-color: #f0e840;
    transform: rotate(12deg);
}

.energy.bsyd.struck::after {
    top: 6px;
}

.mms {
    font-size: 9px;
    line-height: 13px;
    padding: 1px 0 0 3px;
}

.hall-tag {
    margin-top: 3px;
    text-align: center;
    font-size: 14px;
    line-height: 17px;
}

.hall-tag.on {
    background-color: #00d800;
}

.hall-tag.trip {
    background-color: #f00;
}

.onoff {
    font-size: 9px;
    line-height: 17px;
    margin-top: 3px;
    padding-left: 9px;
}

/* prebuncher */
.prebuncher {
    left: 426px;
    top: 216px;
    width: 253px;
    height: 50px;
    border: 3px solid #000;
    white-space: nowrap;
}

.pb-head {
    display: flex;
    align-items: center;
    height: 19px;
    background-color: #8a1a8e;
    padding-left: 16px;
}

.pb-name {
    width: 173px;
    color: #b4b8b4;
    font-weight: bold;
    font-size: 15px;
}

.pb-expert {
    width: 40px;
    color: #b4b8b4;
    font-size: 12px;
}

.pb-link {
    width: 15px;
    height: 15px;
}

.pb-link .ico {
    width: 10px;
    height: 10px;
}

.pb-body {
    display: flex;
    align-items: center;
    height: 26px;
    padding-left: 8px;
    font-size: 9px;
}

.pb-off {
    width: 30px;
    height: 15px;
}

.pb-halo {
    width: 34px;
    height: 22px;
    margin-left: 1px;
}

.pb-on {
    width: 29px;
    height: 15px;
}

.pb-switch {
    width: 41px;
    height: 20px;
    margin-left: 1px;
    background-color: #2b60e6;
}

.pb-switch svg {
    display: block;
}

.pb-slider {
    width: 67px;
    height: 18px;
    margin-left: 3px;
    background-color: #73ddff;
    padding: 3px;
}

.pb-track {
    height: 10px;
    background-color: #7c7c78;
    border: 1px solid #444;
    padding: 1px 0 0 16px;
}

.pb-track i {
    width: 28px;
    height: 7px;
    background: linear-gradient(90deg, #73ddff 14px, #333 14px, #333 15px, #73ddff 15px);
}

.pb-entry {
    width: 41px;
    height: 20px;
    margin-left: 2px;
    background-color: #a0ffff;
    border-color: #667 #fff #fff #667;
    padding-left: 7px;
    font-size: 14px;
}

.pb-kev {
    margin-left: 2px;
    font-size: 11px;
}

/* locator */
.locator {
    left: 426px;
    top: 269px;
    width: 252px;
    height: 66px;
    border: 1px solid #000;
    white-space: nowrap;
}

.loc-left {
    width: 94px;
}

.loc-head {
    height: 23px;
    background-color: #a0a09e;
    text-align: center;
    font-weight: bold;
    font-size: 13px;
    line-height: 22px;
}

.loc-val {
    height: 27px;
    background-color: #0000a8;
    color: #f8f040;
    text-align: center;
    font-size: 18px;
    line-height: 27px;
}

.loc-line {
    position: absolute;
    left: 114px;
    top: 5px;
    display: flex;
    height: 12px;
}

.loc-line span {
    width: 40px;
    background-color: #00d800;
    text-align: center;
    font-size: 8px;
    line-height: 12px;
}

.loc-line i {
    width: 12px;
    border: 1px solid #fff;
}

.dumps {
    position: absolute;
    left: 171px;
    top: 0;
    width: 15px;
    height: 64px;
    background-color: #7c7c78;
    font-weight: bold;
    font-size: 8px;
    line-height: 10px;
    text-align: center;
    padding-top: 7px;
}

/* bcms */
.bcms {
    left: 623px;
    top: 5px;
    width: 150px;
    height: 135px;
    border: 3px solid #000;
    white-space: nowrap;
}

.bcms-top {
    display: flex;
    height: 97px;
    border-bottom: 2px solid #000;
}

.bcms-main {
    width: 116px;
}

.bcms-head {
    display: flex;
    height: 11px;
    padding-left: 3px;
    font-size: 13px;
    line-height: 11px;
}

.bcms-btn {
    width: 46px;
    height: 9px;
    margin-right: 15px;
}

.bcms-ico {
    width: 4px;
    height: 4px;
}

.bcm-line {
    display: flex;
    height: 23px;
    font-size: 18px;
    line-height: 21px;
}

.bcm-line span {
    width: 49px;
    padding-left: 4px;
}

.bcm-line div {
    width: 66px;
    height: 21px;
    background-color: #2b60e6;
    color: #fff;
    text-align: center;
}

.bcm-clear {
    display: flex;
    align-items: flex-start;
    margin: 2px 0 0 4px;
}

.clear {
    width: 48px;
    height: 31px;
    font-size: 15px;
    border-color: #667 #667 #667 #d8fcff;
}

.clear-slot {
    width: 10px;
    height: 29px;
    margin: 1px 0 0 3px;
}

.sq {
    width: 20px;
    height: 22px;
    margin: 3px 0 0 2px;
    background-color: #70ff70;
    border: 1px solid #222;
}

.loss {
    width: 31px;
    font-size: 10px;
    line-height: 11px;
    text-align: center;
}

.loss-bar {
    width: 26px;
    height: 69px;
    margin: 0 0 2px 2px;
    background-color: #8c908a;
    border: 1px solid #2ec020;
}

.loss-bar i {
    height: 33px;
    border-bottom: 1px solid #2ec020;
}

.loss-val {
    width: 31px;
    height: 17px;
    background-color: #2b60e6;
    color: #b4c8ff;
    font-size: 13px;
    line-height: 17px;
}

.bcms-bot {
    display: flex;
    padding-top: 2px;
}

.oc-labels {
    width: 58px;
    font-size: 11px;
    line-height: 11px;
    text-align: right;
    padding-top: 1px;
}

.oc-cells {
    margin-left: 2px;
}

.oc-grid {
    width: 85px;
    display: grid;
    grid-template-columns: repeat(5, 1fr);
    grid-auto-rows: 10px;
    row-gap: 1px;
    background-color: #222;
    border: 1px solid #2ec020;
}

.oc-grid i {
    background-color: #70ff70;
    border-right: 1px solid #222;
}

.oc-names {
    display: flex;
    justify-content: space-between;
    padding: 0 1px 0 4px;
    font-size: 8px;
    line-height: 10px;
}

.bsy {
    left: 814px;
    top: 15px;
    width: 225px;
    height: 35px;
    border: 5px solid #7c787c;
    display: flex;
    align-items: center;
}

.bsy b {
    width: 64px;
    padding-left: 14px;
    font-size: 18px;
}

.bsy-a {
    width: 62px;
}

.bsy-b {
    width: 60px;
    margin-left: 32px;
}

.bsy-tiny {
    left: 895px;
    top: 51px;
}

/* inj trans */
.inj {
    left: 686px;
    top: 232px;
    width: 92px;
    height: 178px;
}

.inj-title {
    text-align: right;
    padding-right: 8px;
    font-size: 13px;
    line-height: 15px;
    margin-top: 3px;
}

.inj-row {
    display: flex;
    height: 17px;
    font-size: 13px;
    line-height: 17px;
}

.inj-row span {
    width: 24px;
    padding-left: 6px;
}

.inj-row div {
    width: 61px;
    background-color: #2b60e6;
    color: #c8d8ff;
    text-align: center;
}

.inj-first {
    margin-top: 2px;
}

.inj-a4 {
    margin-top: 10px;
}

.inj-a3 {
    margin-top: 7px;
}

.inj-ms {
    margin-top: 9px;
}

.inj-row.inj-ms span {
    padding-left: 2px;
}

.inj-a2 {
    margin-top: 10px;
}

.inj-a1 {
    margin-top: 12px;
}

/* link menus */
.menu {
    display: flex;
    flex-direction: column;
    align-items: center;
    gap: 6px;
    padding-top: 11px;
}

.menu-left {
    left: 265px;
    top: 345px;
    width: 83px;
    height: 182px;
}

.menu-right {
    left: 693px;
    top: 415px;
    width: 83px;
    height: 141px;
    padding-top: 7px;
}

.menu-btn {
    width: 48px;
    height: 14px;
    background-color: #73ddff;
    border: 1px solid #000;
    text-align: center;
    font-size: 11px;
    line-height: 12px;
}

.menu-tight {
    font-size: 10px;
}

.menu-sel {
    width: 56px;
    height: 21px;
    margin-bottom: -3px;
    background-color: #f0b428;
    border: 1px solid #000;
    display: flex;
    align-items: center;
    justify-content: center;
}

/* accel status */
.accel {
    left: 357px;
    top: 343px;
    width: 223px;
    height: 226px;
    padding-left: 6px;
    text-align: center;
}

.ac-label {
    width: 200px;
    height: 15px;
    font-size: 10.5px;
    line-height: 15px;
}

.ac-val {
    width: 200px;
    height: 15px;
    background-color: #2b60e6;
    color: #d8e8ff;
    font-size: 12px;
    line-height: 15px;
}

.ac-label:first-child {
    height: 17px;
    line-height: 20px;
}

.ac-low {
    display: flex;
    align-items: flex-start;
}

.heart {
    width: 89px;
    margin: 41px 0 0 4px;
}

.heart small {
    display: block;
    font-size: 8px;
    line-height: 9px;
}

.heart-val {
    width: 79px;
    height: 34px;
    background-color: #2b60e6;
    color: #d8e8ff;
    font-size: 12px;
    line-height: 17px;
    text-align: right;
    padding-right: 1px;
}

.heart small:nth-of-type(2) {
    margin-top: 1px;
    line-height: 10px;
    margin-left: -4px;
    width: 87px;
}

.heart-one {
    height: 17px;
}

.cw-perm {
    width: 113px;
    height: 123px;
    border: 2px solid #000;
    padding-top: 3px;
    font-size: 13px;
}

.forman {
    left: 585px;
    top: 557px;
    font-size: 11px;
    white-space: nowrap;
}

/* fast feedback */
.fb {
    left: 779px;
    width: 251px;
    height: 212px;
    border: 2px solid #000;
    white-space: nowrap;
}

.fb-a {
    top: 136px;
}

.fb-c {
    top: 348px;
}

.fb h3 {
    height: 18px;
    background-color: #a0ffff;
    font-weight: bold;
    font-size: 14px;
    line-height: 18px;
    text-align: center;
}

.fb-rule {
    height: 2px;
    margin: 0 3px;
    background-color: #000;
}

.fb-row {
    display: flex;
    padding-left: 4px;
}

.fb-sys {
    height: 16px;
    margin-top: 3px;
}

.fb-ff {
    height: 15px;
}

.fb-big {
    width: 27px;
    font-size: 15px;
    line-height: 15px;
}

.btn.fb-small {
    width: 29px;
    height: 13px;
    margin-right: 3px;
    font-size: 11px;
    border-width: 1px;
    border-color: #d8fcff #4a6a78 #4a6a78 #d8fcff;
}

.fb-state {
    position: relative;
    width: 68px;
    margin-left: 2px;
    color: #f00;
    font-size: 15px;
    line-height: 18px;
}

.struck-line::after {
    content: "";
    position: absolute;
    left: 0;
    top: 9px;
    width: 42px;
    height: 2px;
    background-color: #2e9600;
}

.btn.rf {
    width: 37px;
    height: 16px;
    margin-right: 1px;
    font-size: 10px;
    border-width: 1px;
}

.fb-comm {
    height: 21px;
    padding-left: 4px;
    margin-bottom: 3px;
}

.fb-name {
    width: 42px;
    font-size: 12px;
    line-height: 20px;
}

.fb-ok {
    width: 51px;
    height: 18px;
    margin-top: 1px;
    background-color: #2b60e6;
    color: #d8e8ff;
    font-size: 14px;
    line-height: 16px;
}

.btn.fb-reset {
    width: 45px;
    height: 20px;
    margin-left: 3px;
    font-size: 12px;
}

.fb-dac {
    width: 33px;
    margin-left: 5px;
    font-size: 12px;
    line-height: 18px;
}

.fb-bpm {
    height: 21px;
    margin: 4px 0 4px;
    padding-left: 5px;
}

.fb-bpm-name {
    width: 35px;
    font-size: 15px;
    line-height: 21px;
}

.btn.fb-lh {
    width: 29px;
    height: 16px;
    margin: 2px 3px 0 0;
    font-size: 11px;
    border-width: 1px;
}

.fb-gain {
    position: relative;
    width: 75px;
    margin-left: 11px;
    font-size: 14px;
    line-height: 20px;
}

.red-txt {
    color: #e00;
}

.green-txt {
    color: #2e7a00;
}

.fb-gain.struck-line::after {
    width: 56px;
    top: 10px;
}

.btn.fb-search {
    width: 50px;
    height: 20px;
    font-size: 12px;
}

.fb-mode {
    height: 48px;
}

.fb-sat {
    width: 58px;
    font-size: 9px;
    text-align: center;
}

.sat-title {
    height: 10px;
    line-height: 12px;
    padding-left: 3px;
    text-align: left;
}

.sat-line {
    display: flex;
    align-items: center;
    height: 11px;
    margin-top: 1px;
    padding-left: 6px;
}

.sat-line span {
    width: 29px;
    text-align: left;
}

.dot.sat-dot {
    width: 9px;
    height: 9px;
}

.sat-btns {
    display: flex;
    gap: 2px;
    height: 13px;
    margin-top: 2px;
}

.sat-btns .btn {
    width: 27px;
    font-size: 9px;
    border-width: 1px;
    border-color: #d8fcff #333 #333 #d8fcff;
}

.fb-sw {
    width: 133px;
}

.sw-line {
    display: flex;
    height: 24px;
    padding-left: 2px;
    font-size: 13px;
}

.sw-name {
    width: 91px;
    color: #2e7a00;
    line-height: 26px;
}

.sw-rel {
    color: #e00;
    font-size: 14px;
    line-height: 14px;
}

.sw-abs {
    margin-left: 5px;
}

.sw-val {
    width: 124px;
    height: 21px;
    background-color: #0000a8;
    color: #f8f040;
    font-size: 17.5px;
    line-height: 21px;
    text-align: center;
}

.sw-narrow {
    width: 121px;
    margin-left: 2px;
}

.fb-fd {
    width: 40px;
    padding-top: 6px;
}

.fb-fd .btn {
    height: 20px;
    font-size: 12px;
}

.fb-act {
    height: 30px;
    padding-top: 4px;
}

.btn.fb-link {
    width: 60px;
    height: 21px;
    gap: 4px;
    font-size: 12px;
}

.fb-lamps {
    width: 115px;
    padding-left: 15px;
}

.fb-lamp-names {
    display: grid;
    grid-template-columns: 31px 27px 27px;
    width: 85px;
    height: 9px;
    background-color: #a0a09e;
    font-size: 8px;
    line-height: 9px;
    text-align: center;
}

.fb-lamp-row {
    display: flex;
    gap: 13px;
    padding-left: 8px;
}

.fb-lamp {
    width: 16px;
    height: 16px;
    background-color: #f00;
    border: 2px solid #111;
    border-radius: 50%;
}

.fb-lamp.lamp-on {
    background-color: #40b020;
}

.fb-msg {
    width: 238px;
    height: 17px;
    margin: 1px 0 0 5px;
    background-color: #0000a8;
    color: #fff;
    font-size: 9px;
    line-height: 17px;
    padding-left: 1px;
}

/* strip below the screen */
.sep {
    height: 4px;
    background-color: #e4e8e4;
}

.bottom {
    display: flex;
    height: 188px;
}

.ipm {
    width: 145px;
    background-color: #7c787c;
    overflow: hidden;
    border-right: 1px solid #000;
    color: #b4b4b4;
    font-size: 15px;
    white-space: nowrap;
}

.ipm-name {
    height: 15px;
    line-height: 15px;
    padding-left: 1px;
}

.ipm-name.first {
    height: 14px;
    padding-left: 8px;
    line-height: 9px;
}

.ipm-row {
    display: flex;
    height: 22px;
    margin-bottom: 5px;
    color: #fff;
    font-size: 17px;
    line-height: 22px;
    text-align: right;
}

.ipm-row.dark {
    margin-bottom: 1px;
}

.ipm-a {
    width: 32px;
    margin-left: 1px;
    background-color: #2b60e6;
}

.ipm-b {
    width: 81px;
    margin-left: 5px;
    background-color: #2b60e6;
    text-align: center;
}

.dark .ipm-a {
    width: 37px;
    margin-left: 0;
    background-color: #0000a8;
}

.dark .ipm-b {
    margin-left: 3px;
    background-color: #0000a8;
    text-align: right;
}

.ipm-row span {
    margin-left: 4px;
    color: #b4b4b4;
    font-size: 11px;
    line-height: 11px;
    text-align: left;
    padding-top: 4px;
}

.plot {
    display: block;
    width: 888px;
    height: 188px;
}

.grid path {
    stroke: #999;
    fill: none;
    stroke-dasharray: 1 2;
}

.ticks text {
    fill: #00f;
    font-weight: bold;
    font-size: 13px;
    text-anchor: end;
}

.legend {
    fill: #00f;
    font-weight: bold;
    font-size: 13px;
}
```

FILE: plot.js
```js
// sampled HALLA trace, quiet stretches get jitter added below
var anchors = [
    [245, 903, 1], [252, 904, 0], [253, 941, 0], [258, 941, 0], [259, 903, 1], [319, 904, 0],
    [320, 941, 0], [321, 825, 0], [322, 858, 0], [323, 876, 0], [325, 900, 0], [326, 903, 1],
    [397, 904, 0], [398, 941, 0], [399, 860, 0], [400, 871, 0], [401, 888, 0], [402, 900, 0], [403, 914, 0], [404, 903, 1],
    [603, 904, 0], [604, 941, 0], [606, 846, 0], [607, 859, 0], [608, 876, 0], [609, 888, 0], [610, 903, 1],
    [755, 905, 0], [756, 941, 0], [769, 941, 0], [770, 844, 0], [771, 863, 0], [772, 877, 0], [773, 890, 0], [774, 903, 1],
    [805, 905, 0], [806, 850, 1], [830, 850, 1], [845, 847, 1], [874, 853, 0], [875, 837, 0], [875, 941, 0], [876, 853, 1],
    [888, 852, 0], [889, 875, 0], [890, 890, 0], [891, 902, 1], [900, 903, 0], [901, 849, 1], [912, 851, 0],
    [913, 868, 0], [914, 875, 0], [915, 892, 0], [916, 903, 1], [927, 904, 0], [928, 852, 1], [935, 850, 0],
    [936, 860, 0], [937, 875, 0], [938, 890, 0], [939, 905, 0], [941, 912, 0], [942, 941, 0], [945, 941, 0],
    [946, 855, 0], [947, 878, 0], [948, 898, 0], [950, 908, 1], [954, 905, 0], [955, 850, 0], [956, 852, 0]
];

var seed = 12345;
function rnd() {
    seed = (seed * 1103 + 12345) % 65536;
    return seed / 65536;
}

var points = [];
for (var i = 0; i < anchors.length - 1; i++) {
    var a = anchors[i];
    var b = anchors[i + 1];
    points.push(a[0] + ',' + a[1]);
    if (a[2]) {
        for (var x = a[0]; x < b[0]; x += 0.34) {
            var y = a[1] + (b[1] - a[1]) * (x - a[0]) / (b[0] - a[0]);
            points.push(x.toFixed(2) + ',' + (y + (rnd() - 0.5) * 8).toFixed(1));
        }
    }
}
points.push('956,852');
document.getElementById('trace').setAttribute('points', points.join(' '));
```
